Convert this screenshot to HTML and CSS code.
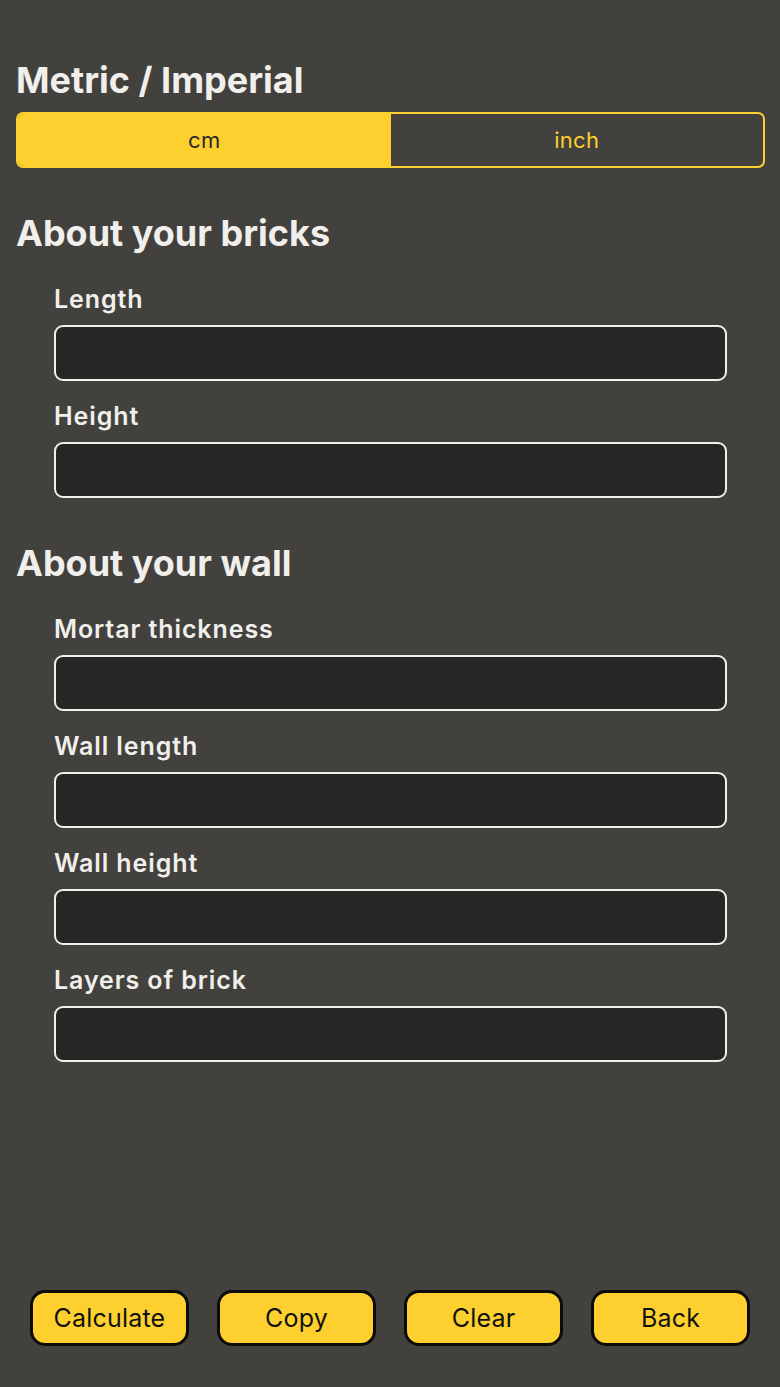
FILE: index.html
```html
<!DOCTYPE html>
<html lang="en">
<head>
<meta charset="utf-8">
<title>Brick calculator</title>
<link rel="stylesheet" href="styles.css">
</head>
<body>
<div class="page">
  <h2 class="section-title first">Metric / Imperial</h2>
  <div class="segmented">
    <button class="seg seg-active">cm</button>
    <button class="seg">inch</button>
  </div>

  <h2 class="section-title">About your bricks</h2>
  <div class="fields">
    <label class="field"><span class="field-label">Length</span><input class="field-input" type="text"></label>
    <label class="field"><span class="field-label">Height</span><input class="field-input" type="text"></label>
  </div>

  <h2 class="section-title">About your wall</h2>
  <div class="fields">
    <label class="field"><span class="field-label">Mortar thickness</span><input class="field-input" type="text"></label>
    <label class="field"><span class="field-label">Wall length</span><input class="field-input" type="text"></label>
    <label class="field"><span class="field-label">Wall height</span><input class="field-input" type="text"></label>
    <label class="field"><span class="field-label">Layers of brick</span><input class="field-input" type="text"></label>
  </div>

  <div class="actions">
    <button class="action">Calculate</button>
    <button class="action">Copy</button>
    <button class="action">Clear</button>
    <button class="action">Back</button>
  </div>
</div>
</body>
</html>
```
FILE: styles.css
```css
* { box-sizing: border-box; }
html, body { margin: 0; padding: 0; }
body {
  background: #42413d;
  color: #f1efeb;
  font-family: Inter, "Liberation Sans", Arial, sans-serif;
}
.page {
  min-height: 100vh;
  display: flex;
  flex-direction: column;
  padding: 58px 15px 41px 16px;
}
.section-title {
  margin: 43px 0 30px 0;
  font-size: 36px;
  line-height: 44px;
  font-weight: 700;
  letter-spacing: 0;
}
.section-title.first { margin: 0 0 10px 0; }
.segmented {
  display: flex;
  height: 56px;
  border: 2px solid #fdd02f;
  border-radius: 7px;
  overflow: hidden;
}
.seg {
  flex: 1 1 0;
  border: 0;
  margin: 0;
  padding: 0;
  background: transparent;
  color: #fdd02f;
  font-family: Inter, "Liberation Sans", Arial, sans-serif;
  font-size: 22px;
  font-weight: 400;
  letter-spacing: 0.3px;
}
.seg-active {
  background: #fdd02f;
  color: #2a2926;
}
.fields {
  display: flex;
  flex-direction: column;
  gap: 21px;
  padding: 0 38px;
}
.field {
  display: flex;
  flex-direction: column;
  gap: 12px;
}
.field-label {
  font-size: 25px;
  line-height: 28px;
  font-weight: 600;
  letter-spacing: 0.9px;
}
.field-input {
  height: 56px;
  width: 100%;
  background: #262624;
  border: 2px solid #f1efeb;
  border-radius: 9px;
  color: #f1efeb;
  font-size: 22px;
  padding: 0 12px;
  outline: none;
}
.actions {
  margin-top: auto;
  display: flex;
  gap: 28px;
  padding: 0 15px 0 14px;
}
.action {
  flex: 1;
  height: 56px;
  background: #fdd02f;
  border: 3px solid #0c0b0a;
  border-radius: 15px;
  color: #111;
  font-family: Inter, "Liberation Sans", Arial, sans-serif;
  font-size: 25px;
  font-weight: 400;
  letter-spacing: 0.2px;
}
```
